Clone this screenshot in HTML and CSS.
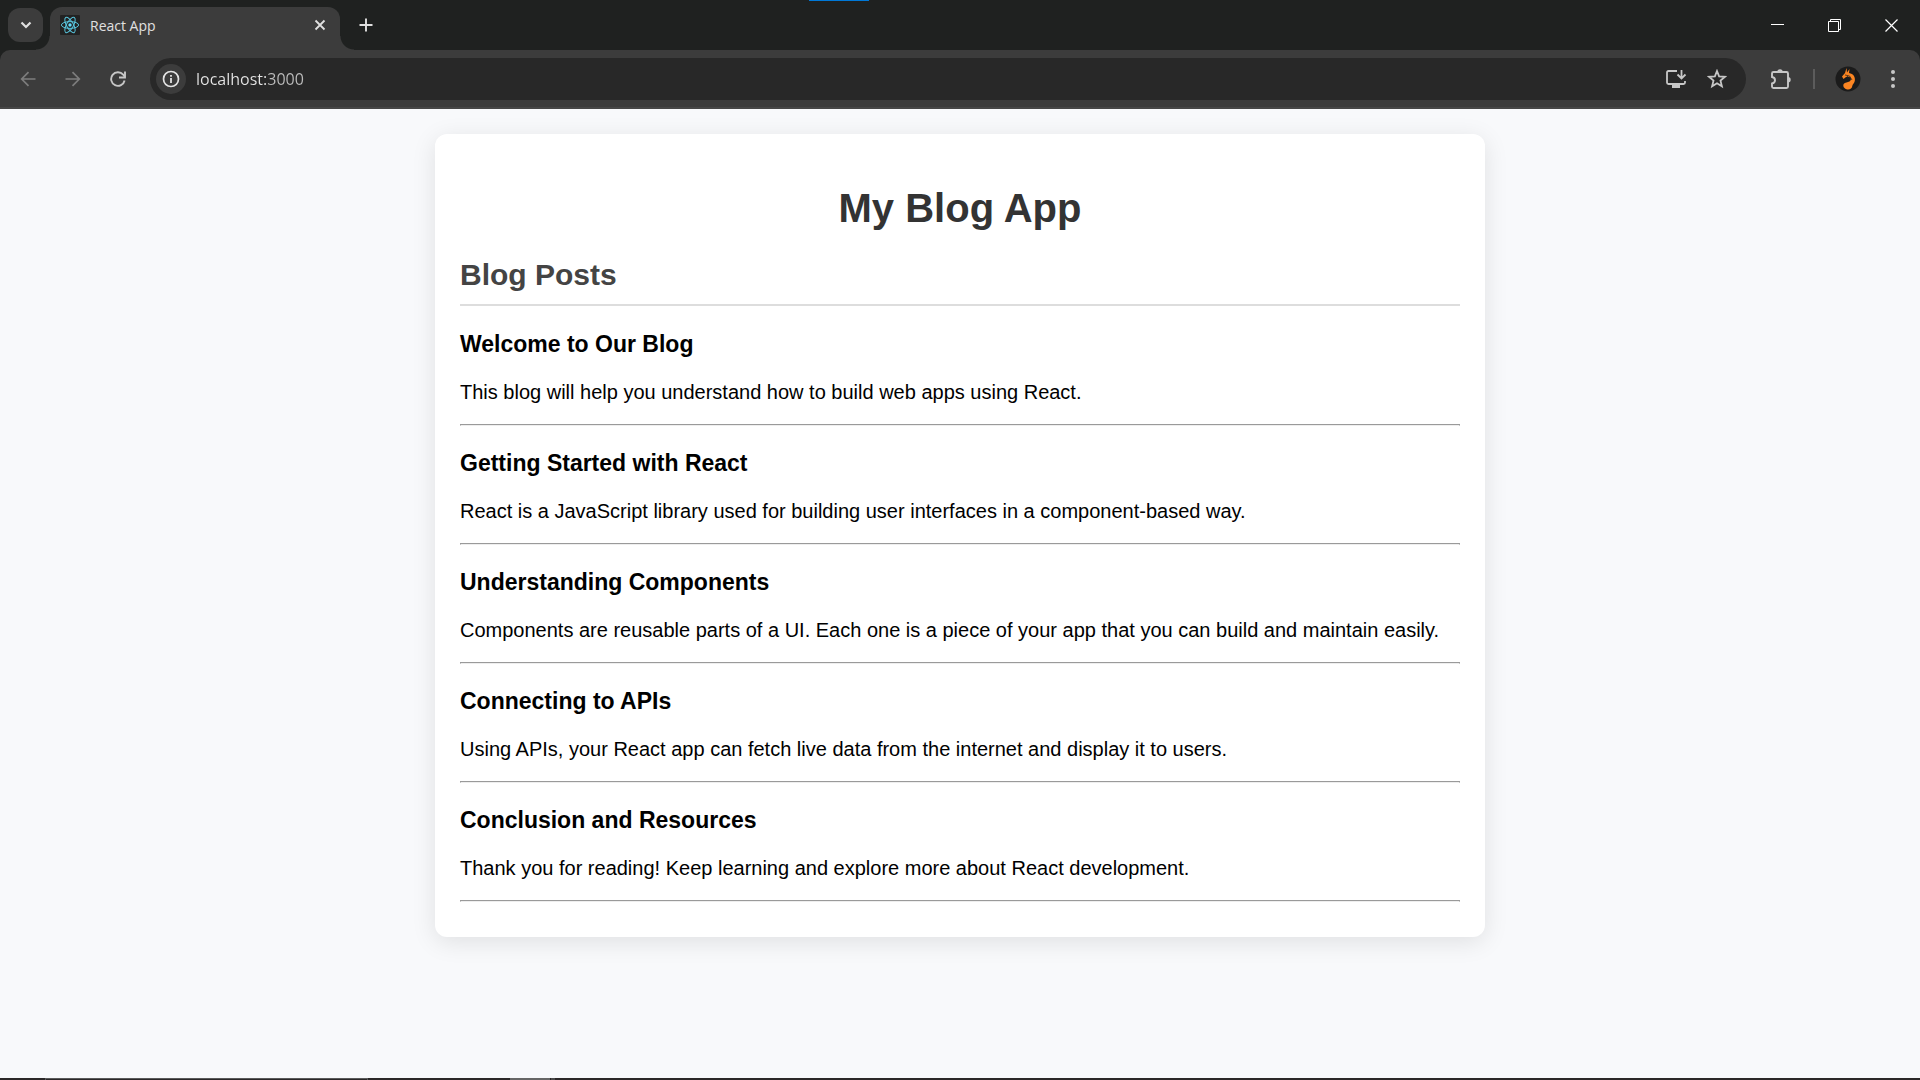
FILE: index.html
```html
<!DOCTYPE html>
<html lang="en">
<head>
<meta charset="utf-8">
<title>React App</title>
<link rel="stylesheet" href="styles.css">
</head>
<body>
<div class="window">
  <header class="chrome">
    <div class="tabstrip">
      <button class="tab-search" aria-label="Search tabs"><svg width="12" height="8" viewBox="0 0 12 8"><path d="M1.5 1.5 6 6l4.500-4.500" fill="none" stroke="currentColor" stroke-width="2.200"/></svg></button>
      <div class="tab">
        <svg class="favicon" width="20" height="20" viewBox="0 0 20 20"><rect width="20" height="20" rx="1" fill="#222"/><g fill="none" stroke="#58c4dc" stroke-width="1"><ellipse cx="10" cy="10" rx="8.600" ry="3.400"/><ellipse cx="10" cy="10" rx="8.600" ry="3.400" transform="rotate(60 10 10)"/><ellipse cx="10" cy="10" rx="8.600" ry="3.400" transform="rotate(120 10 10)"/></g><circle cx="10" cy="10" r="1.700" fill="#61dafb"/></svg>
        <span class="tab-title">React App</span>
        <button class="plain tab-close" aria-label="Close tab"><svg width="12" height="12" viewBox="0 0 12 12"><path d="m1.500 1.500 9 9m0-9-9 9" fill="none" stroke="currentColor" stroke-width="1.800"/></svg></button>
      </div>
      <button class="plain new-tab" aria-label="New tab"><svg width="14" height="14" viewBox="0 0 14 14"><path d="M7 .5v13M.5 7h13" fill="none" stroke="currentColor" stroke-width="1.900"/></svg></button>
      <div class="window-controls">
        <button class="plain" aria-label="Minimize"><svg width="13" height="13" viewBox="0 0 13 13"><path d="M0 5.500h13" stroke="currentColor"/></svg></button>
        <button class="plain" aria-label="Restore"><svg width="13" height="13" viewBox="0 0 13 13"><path d="M.5 2.500h10v10H.5zM2.500 2.500v-2h10v10h-2" fill="none" stroke="currentColor"/></svg></button>
        <button class="plain" aria-label="Close"><svg width="13" height="13" viewBox="0 0 13 13"><path d="m.5.5 12 12m0-12-12 12" stroke="currentColor" stroke-width="1.200"/></svg></button>
      </div>
    </div>
    <div class="toolbar">
      <div class="nav">
        <button class="plain dim" aria-label="Back"><svg width="16" height="16" viewBox="0 0 16 16"><path d="M15.500 8H2M8.500 1.200 1.700 8l6.800 6.800" fill="none" stroke="currentColor" stroke-width="1.700"/></svg></button>
        <button class="plain dim" aria-label="Forward"><svg width="16" height="16" viewBox="0 0 16 16"><path d="M.5 8H14M7.500 1.200 14.300 8l-6.800 6.800" fill="none" stroke="currentColor" stroke-width="1.700"/></svg></button>
        <button class="plain" aria-label="Reload"><svg width="16" height="16" viewBox="0 0 16 16"><path d="M14.600 9.500A6.800 6.800 0 1 1 13.200 3.700L15 6" fill="none" stroke="currentColor" stroke-width="1.900"/><path d="M15 .5v6H9" fill="none" stroke="currentColor" stroke-width="1.900"/></svg></button>
      </div>
      <div class="address">
        <button class="site-info" aria-label="Site information"><svg width="18" height="18" viewBox="0 0 18 18"><circle cx="9" cy="9" r="7.500" fill="none" stroke="currentColor" stroke-width="1.700"/><path d="M9 8v5M9 5v1.800" stroke="currentColor" stroke-width="1.800"/></svg></button>
        <input class="url" type="text" value="localhost:3000" aria-label="Address">
        <button class="plain" aria-label="Install app"><svg width="22" height="20" viewBox="0 0 22 20"><path d="M12 2H3.500Q2 2 2 3.500v10Q2 15 3.500 15h15q1.500 0 1.500-1.500V12" fill="none" stroke="currentColor" stroke-width="1.800"/><path d="M7 15h8v4H7z" fill="currentColor"/><path d="M16.500 1v8m-4-3.500 4 4 4-4" fill="none" stroke="currentColor" stroke-width="1.800"/></svg></button>
        <button class="plain" aria-label="Bookmark"><svg width="20" height="20" viewBox="0 0 20 20"><path d="m10 2 2.100 5.300 5.900.5-4.500 3.800 1.400 5.700L10 14.200l-4.900 3.100 1.400-5.700L2 7.800l5.900-.5z" fill="none" stroke="currentColor" stroke-width="1.800"/></svg></button>
      </div>
      <div class="actions">
        <button class="plain" aria-label="Extensions"><svg width="22" height="22" viewBox="0 0 22 22"><path d="M3.500 4h13q1.500 0 1.500 1.500v13q0 1.500-1.500 1.500h-13Q2 20 2 18.500v-3q3-.6 3-3.300T2 9V5.500Q2 4 3.500 4z" fill="none" stroke="currentColor" stroke-width="1.900"/><path d="M7.300 4a2.700 2.700 0 0 1 5.400 0zM18 9a2.600 2.600 0 0 1 0 5.400z" fill="currentColor"/></svg></button>
        <span class="divider"></span>
        <button class="plain" aria-label="Profile"><svg width="26" height="26" viewBox="0 0 26 26"><circle cx="13" cy="13" r="12.500" fill="#1b1b1b"/><path d="m11.500 2 .5 4.500L14.500 3 14 7c4.500.8 6.500 4 5.800 8-.5 2.600-2.300 3-2.500 5-.3 2.500-2.500 4-5 3.500-2.300-.4-4-2-4-4 0-2.500 2.700-3 4.700-3.500 2.300-.5 3.600-2.300 2.500-4.500-1.500-.8-3-1-4.500-.5L8.500 13 7 10.500 10 7z" fill="#fb8522"/><path d="m10 9 4.500 1 2.500 4m-5-4 3.500 3" fill="none" stroke="#1b1b1b" stroke-width=".7"/></svg></button>
        <button class="plain" aria-label="Menu"><svg width="20" height="20" viewBox="0 0 20 20"><g fill="currentColor"><circle cx="10" cy="3" r="2"/><circle cx="10" cy="10" r="2"/><circle cx="10" cy="17" r="2"/></g></svg></button>
      </div>
    </div>
  </header>

  <main class="page">
    <div class="container">
      <h1>My Blog App</h1>
      <h2>Blog Posts</h2>
      <article class="post">
        <h3>Welcome to Our Blog</h3>
        <p>This blog will help you understand how to build web apps using React.</p>
        <hr>
      </article>
      <article class="post">
        <h3>Getting Started with React</h3>
        <p>React is a JavaScript library used for building user interfaces in a component-based way.</p>
        <hr>
      </article>
      <article class="post">
        <h3>Understanding Components</h3>
        <p>Components are reusable parts of a UI. Each one is a piece of your app that you can build and maintain easily.</p>
        <hr>
      </article>
      <article class="post">
        <h3>Connecting to APIs</h3>
        <p>Using APIs, your React app can fetch live data from the internet and display it to users.</p>
        <hr>
      </article>
      <article class="post">
        <h3>Conclusion and Resources</h3>
        <p>Thank you for reading! Keep learning and explore more about React development.</p>
        <hr>
      </article>
    </div>
  </main>

  <footer class="taskbar"><span class="task-search"></span><span class="task-active"></span><span class="task-stack"></span></footer>
  <div class="edge-handle"></div>
</div>
</body>
</html>
```
FILE: styles.css
```css
* { box-sizing: border-box; }

body {
  margin: 0;
  background: #f8f9fb;
  color: #000;
  font-family: Arial, "Liberation Sans", sans-serif;
  font-size: 20px;
}

.window {
  position: relative;
  display: flex;
  flex-direction: column;
  min-height: 100vh;
}

button, input { font: inherit; border: 0; padding: 0; }
svg { display: block; flex: none; }

button {
  display: flex;
  align-items: center;
  justify-content: center;
  color: inherit;
}

.plain { background: none; }

/* Browser frame */
.chrome {
  background: #1f2120;
  color: #e0e0e0;
  font-family: "Segoe UI", "Open Sans", sans-serif;
}

/* Blue handle over the top edge of the window */
.edge-handle {
  position: absolute;
  top: 0;
  left: 50%;
  width: 60px;
  height: 1px;
  margin-left: -151px;
  background: #0078d7;
}

.tabstrip {
  display: flex;
  align-items: center;
  height: 50px;
  padding-left: 8px;
}

.tab-search {
  width: 35px;
  height: 34px;
  border-radius: 12px;
  background: #3c3c3c;
}

.tab {
  position: relative;
  display: flex;
  align-items: center;
  align-self: flex-end;
  width: 290px;
  height: 43px;
  margin-left: 7px;
  padding: 0 12px 7px 10px;
  border-radius: 12px 12px 0 0;
  background: #3c3c3c;
  font-size: 14px;
}

.tab::before,
.tab::after {
  content: "";
  position: absolute;
  bottom: 0;
  width: 14px;
  height: 14px;
}

.tab::before {
  right: 100%;
  background: radial-gradient(circle at 0 0, transparent 13px, #3c3c3c 14px);
}

.tab::after {
  left: 100%;
  background: radial-gradient(circle at 100% 0, transparent 13px, #3c3c3c 14px);
}

.tab-title { flex: 1; margin-left: 10px; }
.tab-close { width: 16px; height: 20px; }
.new-tab { width: 34px; height: 34px; margin-left: 9px; }

.window-controls {
  display: flex;
  align-self: stretch;
  margin-left: auto;
  color: #fff;
}

.window-controls button { width: 57px; }

.toolbar {
  display: flex;
  align-items: center;
  height: 59px;
  padding: 0 17px 0 10px;
  border-bottom: 2px solid #474747;
  border-radius: 10px 10px 0 0;
  background: #3c3c3c;
  color: #c7c7c7;
}

.nav { display: flex; gap: 10px; }
.nav button { width: 35px; height: 36px; }
.dim { color: #7d7d7d; }

.address {
  display: flex;
  flex: 1;
  align-items: center;
  gap: 20px;
  height: 42px;
  margin-left: 15px;
  padding: 0 19px 0 6px;
  border-radius: 21px;
  background: #282828;
}

.site-info {
  width: 30px;
  height: 30px;
  border-radius: 50%;
  background: #3c3c3c;
  color: #e3e3e3;
}

/* The host is drawn brighter than the port. */
.url {
  flex: 1;
  min-width: 0;
  margin-left: -10px;
  background: linear-gradient(to right, #e6e6e6 71px, #bdbdbd 71px);
  background-clip: text;
  color: transparent;
  font-size: 16px;
}

.actions {
  display: flex;
  align-items: center;
  margin-left: 24px;
}

.divider {
  width: 2px;
  height: 20px;
  margin: 0 20px 0 21px;
  background: #5c5c5c;
}

.actions button:last-child { margin-left: 22px; }

/* Blog page */
.page { flex: 1; padding: 25px; }

.container {
  max-width: 1050px;
  margin: 0 auto;
  padding: 51px 25px 35px;
  border-radius: 12px;
  background: #fff;
  box-shadow: 0 5px 25px rgba(0, 0, 0, 0.1);
}

h1 {
  margin: 0 0 27px;
  color: #333;
  font-size: 40px;
  line-height: 46px;
  text-align: center;
}

h2 {
  margin: 0 0 25px;
  padding-bottom: 12px;
  border-bottom: 2px solid #ddd;
  color: #444;
  font-size: 30px;
  line-height: 34px;
}

h3 {
  margin: 24px 0 23px;
  font-size: 23px;
  line-height: 27px;
}

p { margin: 0 0 20px; line-height: 23px; }

hr {
  height: 2px;
  margin: 0;
  border: 1px solid #9a9a9a;
  border-bottom-color: #eee;
}

/* Top edge of the desktop taskbar */
.taskbar {
  display: flex;
  height: 2px;
  background: #2b2828;
}

.task-search { width: 323px; margin-left: 45px; border: 1px solid #5a5a5a; border-bottom: 0; }
.task-active { width: 40px; margin-left: 142px; background: #666; }
.task-stack { width: 4px; margin-left: 1px; background: #4a4a4a; }
```
